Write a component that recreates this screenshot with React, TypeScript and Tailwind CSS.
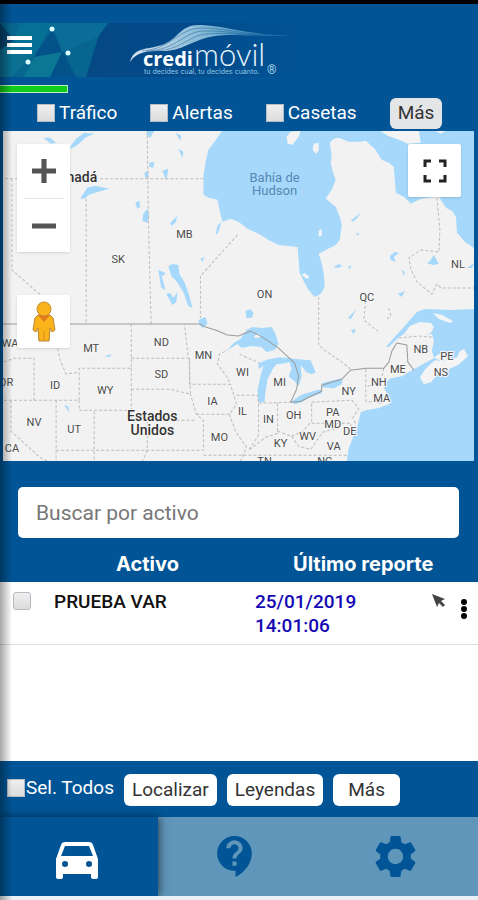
import React from "react";
import { MdAdd, MdRemove, MdContactSupport, MdSettings } from "react-icons/md";

const checkboxClass =
  "size-[18px] shrink-0 appearance-none border border-[#b5bcc4] bg-linear-to-b from-[#efefef] to-[#dcdcdc] checked:bg-[#1d8a3a] checked:bg-none";

const stateLabels: [string, number, number][] = [
  ["SK", 118, 263],
  ["MB", 184, 238],
  ["ON", 264, 298],
  ["QC", 366, 301],
  ["NL", 457, 268],
  ["WA", 10, 347],
  ["MT", 91, 352],
  ["ND", 161, 346],
  ["MN", 203, 359],
  ["OR", 6, 386],
  ["ID", 55, 389],
  ["WY", 105, 394],
  ["SD", 161, 378],
  ["IA", 212, 405],
  ["WI", 242, 376],
  ["MI", 279, 386],
  ["NV", 34, 426],
  ["UT", 74, 433],
  ["CA", 12, 452],
  ["MO", 219, 441],
  ["IL", 242, 415],
  ["IN", 268, 423],
  ["OH", 293, 419],
  ["PA", 332, 416],
  ["MD", 332, 428],
  ["DE", 349, 435],
  ["KY", 280, 447],
  ["WV", 307, 440],
  ["VA", 333, 450],
  ["NY", 348, 395],
  ["NH", 378, 386],
  ["MA", 381, 402],
  ["ME", 397, 373],
  ["NB", 420, 353],
  ["PE", 446, 360],
  ["NS", 440, 376],
  ["TN", 264, 465],
  ["NC", 324, 465],
];

function MapDrawing() {
  return (
    <svg
      viewBox="3 131 470 330"
      preserveAspectRatio="xMidYMid slice"
      className="block h-full w-full bg-[#f2f2f2]"
      role="img"
      aria-label="Mapa"
    >
      <g fill="#a5d8fb">
        <path d="M222 131L214 142L208 150L205 163L203 176L203 195L208 198L217 200L219 210L222 222L230 219L238 222L247 229L258 234L268 240L278 245L297 247L298 260L299 273L304 283L308 290L314 297L320 294L324 287L323 273L321 263L318 254L325 250L335 245L339 240L340 233L341 224L339 217L335 207L325 199L331 190L335 180L332 172L330 163L331 155L329 143L333 139L338 138L348 142L358 142L365 141L374 149L381 160L388 163L393 167L395 193L403 197L410 204L420 199L438 197L445 208L451 211L455 217L456 233L464 242L473 248V131Z" />
        <path d="M416 312L424 309L450 310L473 309V461H346L348 448L356 428L360 412L365 410L377 408L388 404L390 401L387 394L383 388L384 383L390 378L401 376L411 370L420 365L433 358L431 350L433 341L431 334L418 336L403 334L397 338L388 347L385 347L393 338L403 327L409 320Z" />
        <path d="M227 350L233 343L240 339L246 330L252 327L262 328L271 327L275 334L278 344L274 350L266 352L261 347L251 346L241 348L237 344Z" />
        <path d="M258 402L257 390L260 376L263 365L258 369L258 363L268 359L280 357L291 361L285 363L276 364L272 369L267 379L265 391L264 402Z" />
        <path d="M282 357L297 359L310 360L315 372L311 374L306 372L300 365L301 376L298 386L294 381L288 376L291 369L289 362Z" />
        <path d="M290 402L300 395L312 391L321 389V393L309 397L301 402L295 404Z" />
        <path d="M321 383L332 380L342 378L341 384L333 388L321 387Z" />
        <path d="M168 266L172 264L178 265L179 274L184 282L189 296L192 308L188 306L183 292L176 281L171 276Z" />
        <path d="M158 270L165 273L163 276L161 275L164 286L165 290L161 288Z" />
        <path d="M166 294L170 293L173 298L177 292L176 302L172 305Z" />
        <path d="M80 199L87 188L95 186L109 189L98 192L89 195L84 199Z" />
        <path d="M70 147L76 139L84 133L94 134L85 138L79 144L71 149Z" />
        <path d="M43 138L50 138L56 143L51 144Z" />
        <path d="M135 203L139 201L140 207L137 209Z" />
        <path d="M143 214L147 209L149 217L147 223L142 221Z" />
        <path d="M149 163L154 162L153 168L149 167Z" />
        <path d="M144 173L148 171L148 178L145 178Z" />
        <path d="M178 149L183 152L182 158Z" />
        <path d="M175 133L181 136L180 141Z" />
        <path d="M147 131H154L150 138L146 135Z" />
        <path d="M162 171L168 169L166 181Z" />
        <path d="M170 223L177 216L175 223L171 226Z" />
        <path d="M221 222L218 232L215 236L217 226Z" />
        <path d="M198 320L205 317L207 324L202 328L199 325Z" />
        <path d="M245 311L250 309L253 313L251 318L246 318Z" />
        <path d="M350 221L360 213L356 219L352 222Z" />
        <path d="M355 233L359 234L357 236Z" />
        <path d="M389 256L394 252L398 253L393 257L395 262L390 260Z" />
        <path d="M429 261L433 255L438 264L432 265L426 263Z" />
        <path d="M333 267L338 264L342 266L337 268Z" />
        <path d="M347 267L351 265L349 269Z" />
        <path d="M397 294L404 291L401 297Z" />
        <path d="M347 318L356 309L350 319Z" />
        <path d="M350 330L355 329L353 334Z" />
        <path d="M401 270L404 272L403 276Z" />
        <path d="M64 405L68 406L69 412Z" />
        <path d="M104 356L112 354L109 357Z" />
        <path d="M200 259L204 257L202 262Z" />
        <path d="M466 268L473 263L471 268Z" />
      </g>
      <g fill="#f4f4f4">
        <path d="M286 137L290 132L300 131L298 137L292 145L287 144Z" />
        <path d="M313 144L318 143L318 151L315 154L312 150Z" />
        <path d="M379 131H418L420 143L407 144L398 140L387 136Z" />
        <path d="M434 131H445L440 134Z" />
        <path d="M318 231L321 229L321 236L318 237Z" />
        <path d="M301 275L304 273L309 277L306 279Z" />
        <path d="M403 334L409 326L419 322L430 323L433 327L430 333L420 337Z" />
        <path d="M419 377L425 368L434 360L444 361L456 357L459 351L463 349L467 356L458 364L446 370L437 374L430 382L423 384Z" />
        <path d="M433 357L440 353L450 356L447 361L436 359Z" />
        <path d="M432 313L441 315L452 321L449 323L438 319Z" />
        <path d="M253 336L258 334L261 337L255 338Z" />
      </g>
      <g fill="none" stroke="#bcbcbc" strokeWidth="1" strokeDasharray="3 2">
        <path d="M5 179H203" />
        <path d="M12 179V270L45 299V324" />
        <path d="M86 199V324" />
        <path d="M147 131L148 215L150 297L151 324" />
        <path d="M237 235L200 276L200 318" />
        <path d="M318 297L318 345L325 351L340 361L350 369" />
        <path d="M436 198L439 230L438 252L420 250L408 258L410 269L416 282L431 294L436 284L440 288H473" />
        <path d="M131 324V368H79V400" />
        <path d="M52 324L56 340L60 360L66 374L79 372" />
        <path d="M79 400V410H131" />
        <path d="M131 368V420" />
        <path d="M131 358H188L184 324" />
        <path d="M131 389H170L190 394L189 358L189 384H230L226 376L217 364L219 354L227 350" />
        <path d="M4 362L14 358H34V400" />
        <path d="M4 400H79" />
        <path d="M11 400V431L41 458L48 461" />
        <path d="M56 400V461" />
        <path d="M94 411V461" />
        <path d="M56 450H203V420L196 414L190 394" />
        <path d="M131 420H196" />
        <path d="M147 420V450L142 461" />
        <path d="M196 414H229L236 404L230 384" />
        <path d="M229 414L235 431L246 447L240 461" />
        <path d="M236 395H257L258 402V435L248 450" />
        <path d="M277 403V433L265 437L248 450" />
        <path d="M258 403L290 402" />
        <path d="M277 431L291 436L302 431L311 421V402" />
        <path d="M311 402L351 400L358 408L352 418L355 423" />
        <path d="M311 423H350V436" />
        <path d="M291 436L298 446L310 449L322 432L339 427" />
        <path d="M203 455H347" />
        <path d="M365 369V401L381 403" />
        <path d="M383 368L380 382L367 386" />
        <path d="M398 338L418 336L431 337" />
        <path d="M239 354L252 360L259 363" />
        <path d="M365 301L363 320L377 331" />
        <path d="M388 308L390 316L386 319" />
      </g>
      <g fill="none" stroke="#9b9b9b" strokeWidth="1" strokeLinejoin="round">
        <path d="M3 324H200L205 327L215 330L227 335L238 336L250 331L262 337L278 348L294 363L298 376L296 389L290 402L300 401L321 391L321 385L341 379L350 370L365 368H383L388 362L391 351L396 343L406 345L407 362L413 370" />
      </g>
      <g
        className="font-[Roboto,sans-serif]"
        fontSize="11"
        fill="#4a4a4a"
        stroke="#f7f7f7"
        strokeWidth="2"
        paintOrder="stroke"
        textAnchor="middle"
      >
        {stateLabels.map(([name, x, y]) => (
          <text key={name} x={x} y={y}>
            {name}
          </text>
        ))}
      </g>
      <g
        className="font-[Roboto,sans-serif]"
        fontWeight="500"
        fontSize="14"
        fill="#333333"
        stroke="#f7f7f7"
        strokeWidth="2"
        paintOrder="stroke"
        textAnchor="middle"
      >
        <text x="152" y="421">Estados</text>
        <text x="152" y="435">Unidos</text>
        <text x="97" y="182" textAnchor="end">Canadá</text>
      </g>
      <g className="font-[Roboto,sans-serif]" fontSize="13" fill="#5588b4" textAnchor="middle">
        <text x="274" y="182">Bahía de</text>
        <text x="274" y="195">Hudson</text>
      </g>
    </svg>
  );
}

function Pegman() {
  return (
    <svg viewBox="0 0 24 42" className="h-[42px] w-6" aria-hidden="true">
      <path
        d="M6 14L3 17L1 29L4 31L6 27L7 40H17L18 27L20 31L23 29L21 17L18 14Z"
        fill="#fbb31c"
        stroke="#b98332"
        strokeWidth="1"
        strokeLinejoin="round"
      />
      <path d="M6 14H18L12 21Z" fill="#e2791a" />
      <circle cx="12" cy="8" r="7" fill="#fbb31c" stroke="#c58a27" strokeWidth="1" />
      <path d="M12 30V40" stroke="#d78f1b" strokeWidth="1" />
    </svg>
  );
}

function Car() {
  return (
    <svg viewBox="0 0 42 38" className="h-[38px] w-[42px]" fill="currentColor" aria-hidden="true">
      <path
        fillRule="evenodd"
        d="M9 0H33Q36 0 37 3L42 17V35Q42 37 40 37H37Q35 37 35 35V32H7V35Q7 37 5 37H2Q0 37 0 35V17L5 3Q6 0 9 0ZM9 4L5 14H37L33 4ZM9 19A3 3 0 1 0 9 25A3 3 0 1 0 9 19ZM33 19A3 3 0 1 0 33 25A3 3 0 1 0 33 19Z"
      />
    </svg>
  );
}

function BrandBanner() {
  return (
    <svg viewBox="0 0 310 54" className="block h-[54px] w-[310px]" role="img" aria-label="credimóvil">
      <defs>
        <linearGradient id="banner" x1="0" x2="1" y1="0" y2="0">
          <stop offset="0" stopColor="#06497f" />
          <stop offset="0.6" stopColor="#034a8b" />
          <stop offset="1" stopColor="#015596" />
        </linearGradient>
        <linearGradient id="swoosh" x1="0" x2="1" y1="0" y2="0">
          <stop offset="0" stopColor="#ffffff" />
          <stop offset="0.5" stopColor="#8fc5df" />
          <stop offset="1" stopColor="#0a62a2" />
        </linearGradient>
      </defs>
      <rect width="310" height="54" fill="url(#banner)" />
      <path d="M0 0H108L99 12L86 54H0Z" fill="#07658f" />
      <path d="M33 34L52 7L76 54H40Z" fill="#03528a" />
      <path d="M52 0H108L98 14L62 29Z" fill="#096d98" />
      <path d="M0 12L33 33L12 54H0Z" fill="#0a6f91" />
      <path d="M20 0H52L34 34L14 17Z" fill="#067095" />
      <path d="M34 34L62 29L50 54H24Z" fill="#0b7795" />
      <path d="M0 0L14 17L0 27Z" fill="#07436f" />
      <g fill="#d9fbff">
        <circle cx="52" cy="6" r="2.5" />
        <circle cx="68" cy="30" r="2.5" />
        <circle cx="28" cy="39" r="2.5" />
      </g>
      <path
        d="M130 39C134 24 146 27 162 22C180 15 180 1 201 2C228 3 250 13 294 12C260 15 230 9 210 14C191 18 182 28 163 28C148 28 137 28 130 39Z"
        fill="url(#swoosh)"
        opacity="0.85"
      />
      <g fill="none" stroke="#03528f" strokeWidth="0.6" opacity="0.7">
        <path d="M142 28C172 26 178 5 202 5C226 5 248 13 278 12" />
        <path d="M146 28C178 27 184 8 204 8C226 7 244 13 266 12" />
        <path d="M152 28C182 28 188 12 207 11C222 9 236 12 256 12" />
      </g>
      <text x="143" y="43" fontSize="20" fontWeight="700" fill="#ffffff" className="font-['Open_Sans',sans-serif]">
        credi
      </text>
      <text x="194" y="43" fontSize="31" fontWeight="300" fill="#eaf6ff" className="font-[Lato,sans-serif]">
        móvil
      </text>
      <text x="144" y="51" fontSize="7" fill="#8fc7e3" className="font-[Inter,sans-serif]">
        tu decides cual, tu decides cuánto.
      </text>
      <text x="267" y="51" fontSize="12" fill="#a8d5ea" className="font-[Roboto,sans-serif]">
        ®
      </text>
    </svg>
  );
}

const filters = ["Tráfico", "Alertas", "Casetas"];

export default function App() {
  return (
    <div className="relative flex min-h-screen flex-col bg-[#015596] font-[Roboto,sans-serif] text-[19px]/6 text-white">
      <div className="h-1 bg-black" />

      <header className="pt-[19px]">
        <div className="relative">
          <BrandBanner />
          <button type="button" aria-label="Menú" className="absolute top-2 left-1">
            <svg viewBox="0 0 32 32" className="size-8" fill="currentColor" aria-hidden="true">
              <path d="M3 5H28V9H3ZM3 12H28V16H3ZM3 19H28V23H3Z" />
            </svg>
          </button>
        </div>
        <div className="mt-2 h-2 w-[68px] border border-l-0 border-[#b8f0c0] bg-[#12cc1c]" />
        <div className="flex h-[38px] items-center pt-0.5 pl-[37px]">
          {filters.map((name) => (
            <label key={name} className="mr-[33px] flex items-center gap-1">
              <input type="checkbox" className={checkboxClass} />
              {name}
            </label>
          ))}
          <button type="button" className="h-[31px] rounded-md bg-[#e4e5e7] px-2 text-[#333]">
            Más
          </button>
        </div>
      </header>

      <section className="relative mr-1 ml-[3px] h-[330px]">
        <MapDrawing />
        <div className="absolute top-[13px] left-[14px] flex w-[53px] flex-col items-center bg-white text-[#555] shadow">
          <button type="button" aria-label="Acercar" className="flex h-[54px] w-full items-center justify-center">
            <MdAdd className="size-6" viewBox="5 5 14 14" stroke="currentColor" strokeWidth="1" />
          </button>
          <div className="h-px w-10 bg-[#e6e6e6]" />
          <button type="button" aria-label="Alejar" className="flex h-[53px] w-full items-center justify-center">
            <MdRemove className="size-6" viewBox="5 5 14 14" stroke="currentColor" strokeWidth="1" />
          </button>
        </div>
        <button
          type="button"
          aria-label="Street View"
          className="absolute top-[164px] left-[14px] flex size-[53px] items-center justify-center rounded-xs bg-white shadow"
        >
          <Pegman />
        </button>
        <button
          type="button"
          aria-label="Pantalla completa"
          className="absolute top-[13px] right-[13px] flex size-[53px] items-center justify-center rounded-xs bg-white text-[#222] shadow"
        >
          <svg viewBox="0 0 24 24" className="size-6" fill="none" stroke="currentColor" strokeWidth="3" aria-hidden="true">
            <path d="M2 8V2H8M16 2H22V8M22 16V22H16M8 22H2V16" />
          </svg>
        </button>
      </section>

      <div className="mt-[26px] mr-[19px] ml-[18px]">
        <input
          type="text"
          aria-label="Buscar por activo"
          placeholder="Buscar por activo"
          className="h-[51px] w-full rounded-[5px] bg-white px-[18px] text-[21px] text-[#333] placeholder:text-[#777]"
        />
      </div>

      <main className="flex-1 bg-white">
        <table className="w-full table-fixed border-collapse text-left text-[19px]/6">
          <colgroup>
            <col className="w-[54px]" />
            <col />
            <col className="w-[165px]" />
            <col className="w-[58px]" />
          </colgroup>
          <thead className="bg-[#015596] font-[Inter,sans-serif] text-[20px]/6">
            <tr className="h-11">
              <td />
              <th className="pt-2 pr-[14px] text-center font-bold">Activo</th>
              <th colSpan={2} className="pt-2 pl-[38px] font-bold">
                Último reporte
              </th>
            </tr>
          </thead>
          <tbody>
            <tr className="border-b border-[#dedede] align-top font-medium text-[#111]">
              <td className="pt-2.5 pl-[13px]">
                <input
                  type="checkbox"
                  aria-label="Seleccionar PRUEBA VAR"
                  className={checkboxClass + " block rounded-[3px]"}
                />
              </td>
              <td className="pt-2">PRUEBA VAR</td>
              <td className="pt-2 pb-1.5 text-[#1508b4]">
                25/01/2019
                <br />
                14:01:06
              </td>
              <td className="pt-3">
                <div className="flex items-start justify-between pr-[2px] pl-3">
                  <svg viewBox="0 0 14 14" className="size-[14px]" aria-hidden="true">
                    <path d="M0 0L13 5L9 7L13 11L11 13L7 9L5 13Z" fill="#444" />
                  </svg>
                  <button type="button" aria-label="Opciones" className="mt-1 text-black">
                    <svg viewBox="0 0 24 24" className="size-6" fill="currentColor" aria-hidden="true">
                      <circle cx="12" cy="4" r="3" />
                      <circle cx="12" cy="11" r="3" />
                      <circle cx="12" cy="18" r="3" />
                    </svg>
                  </button>
                </div>
              </td>
            </tr>
          </tbody>
        </table>
      </main>

      <div className="flex h-14 items-center pb-[3px] pl-[7px]">
        <label className="mr-[10px] flex items-center gap-px">
          <input type="checkbox" className={checkboxClass} />
          Sel. Todos
        </label>
        <div className="flex gap-[10px] pt-1 text-[#333]">
          <button type="button" className="h-8 rounded-md bg-white px-2">
            Localizar
          </button>
          <button type="button" className="h-8 rounded-md bg-white px-2">
            Leyendas
          </button>
          <button type="button" className="h-8 rounded-md bg-white px-[15px]">
            Más
          </button>
        </div>
      </div>

      <nav className="grid h-[79px] grid-cols-3 bg-[#6096ba] pr-1 text-[#015596]">
        <button
          type="button"
          aria-label="Vehículos"
          className="flex items-center justify-center bg-[#015596] pt-2 pr-1 text-white shadow-[2px_0_8px_rgba(0,0,0,0.5)]"
        >
          <Car />
        </button>
        <button type="button" aria-label="Ayuda" className="flex items-center justify-center pr-1">
          <MdContactSupport className="size-[49px]" />
        </button>
        <button type="button" aria-label="Configuración" className="flex items-center justify-center">
          <MdSettings className="size-[51px]" />
        </button>
      </nav>
      <div className="h-1 bg-[#e9f1f6]" />

      <div className="pointer-events-none absolute inset-y-0 left-0 w-3 bg-linear-to-r from-black/35 to-transparent" />
    </div>
  );
}
